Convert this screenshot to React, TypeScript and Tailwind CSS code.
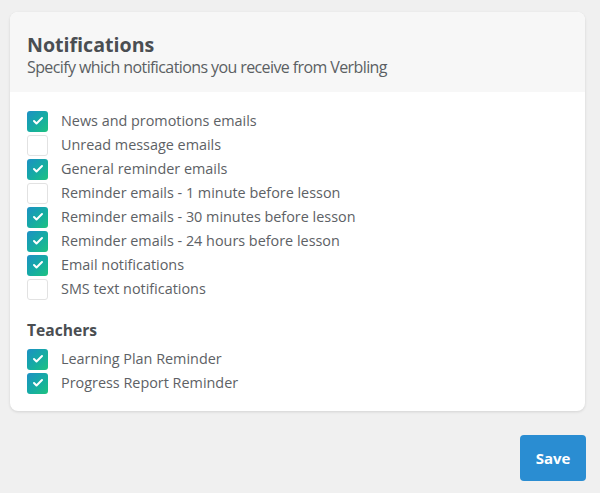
import { Check } from "lucide-react";

const general = [
  { label: "News and promotions emails", on: true },
  { label: "Unread message emails", on: false },
  { label: "General reminder emails", on: true },
  { label: "Reminder emails - 1 minute before lesson", on: false },
  { label: "Reminder emails - 30 minutes before lesson", on: true },
  { label: "Reminder emails - 24 hours before lesson", on: true },
  { label: "Email notifications", on: true },
  { label: "SMS text notifications", on: false },
];

const teachers = [
  { label: "Learning Plan Reminder", on: true },
  { label: "Progress Report Reminder", on: true },
];

function Row({ label, on }: { label: string; on: boolean }) {
  return (
    <label className="flex h-6 items-center gap-[13px]">
      {on ? (
        <span className="flex h-[21px] w-[21px] items-center justify-center rounded-[3px] bg-gradient-to-br from-[#1e8fc4] to-[#1fc27e]">
          <Check size={12} strokeWidth={4} className="text-white" />
        </span>
      ) : (
        <span className="h-[21px] w-[21px] rounded-[3px] border border-[#e2e2e2] bg-white" />
      )}
      <span className="text-[14.4px] text-[#5d6165]">{label}</span>
    </label>
  );
}

export default function App() {
  return (
    <div className="min-h-[493px] bg-[#f0f0f0] px-[10px] pt-[12px] font-['Open_Sans',sans-serif]">
      <div className="w-[575px] overflow-hidden rounded-lg bg-white shadow-[0_1px_3px_rgba(0,0,0,0.12)]">
        <div className="bg-[#f7f7f7] px-[17px] pt-[20px] pb-[14px]">
          <h2 className="text-[19.6px] font-bold leading-[25px] text-[#4a4e52]">Notifications</h2>
          <p className="text-[16px] leading-[21px] tracking-[-0.6px] text-[#5b5f63]">
            Specify which notifications you receive from Verbling
          </p>
        </div>
        <div className="px-[17px] pt-[17px] pb-[16px]">
          <div className="flex flex-col">
            {general.map((r) => (
              <Row key={r.label} {...r} />
            ))}
          </div>
          <h3 className="mt-[18px] mb-[6px] text-[15.6px] font-bold leading-[22px] text-[#4a4e52]">Teachers</h3>
          <div className="flex flex-col">
            {teachers.map((r) => (
              <Row key={r.label} {...r} />
            ))}
          </div>
        </div>
      </div>
      <div className="flex w-[576px] justify-end pt-[24px]">
        <button className="h-[46px] w-[66px] rounded-[4px] bg-[#2a8dd2] text-[15px] font-bold text-white">
          Save
        </button>
      </div>
    </div>
  );
}
